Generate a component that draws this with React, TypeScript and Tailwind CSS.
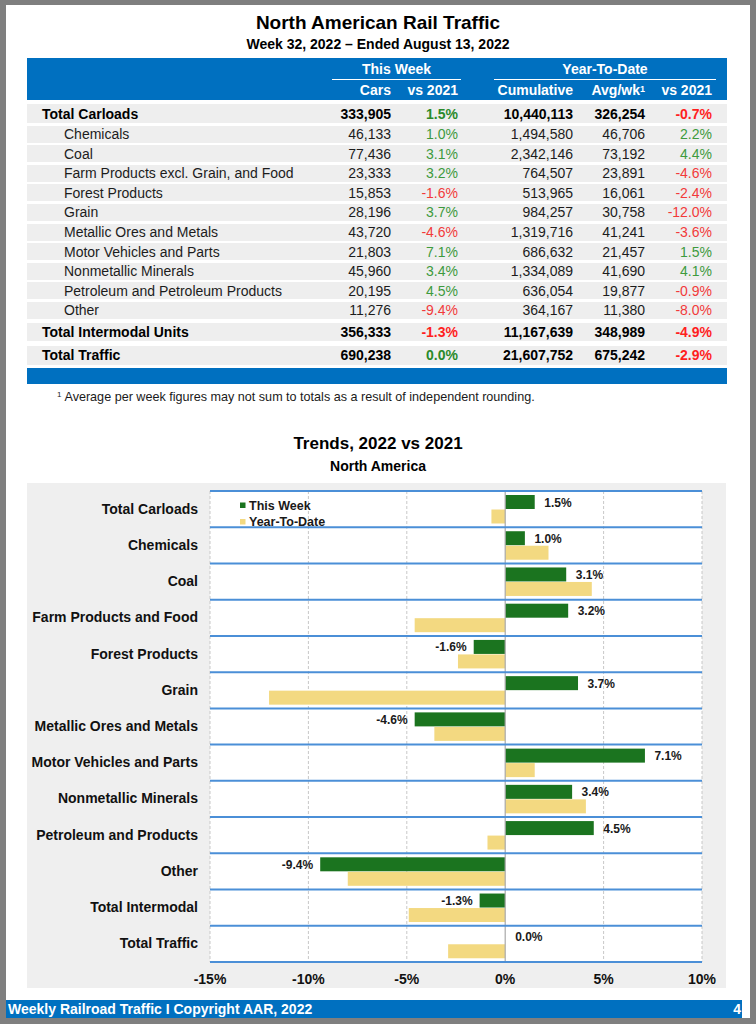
import React from 'react';

interface TrafficRow {
  name: string;
  cars: string;
  vs: string;
  cum: string;
  avg: string;
  ytd: string;
  kind: 'total' | 'sub';
}

const rows: TrafficRow[] = [
  { name: 'Total Carloads', cars: '333,905', vs: '1.5%', cum: '10,440,113', avg: '326,254', ytd: '-0.7%', kind: 'total' },
  { name: 'Chemicals', cars: '46,133', vs: '1.0%', cum: '1,494,580', avg: '46,706', ytd: '2.2%', kind: 'sub' },
  { name: 'Coal', cars: '77,436', vs: '3.1%', cum: '2,342,146', avg: '73,192', ytd: '4.4%', kind: 'sub' },
  { name: 'Farm Products excl. Grain, and Food', cars: '23,333', vs: '3.2%', cum: '764,507', avg: '23,891', ytd: '-4.6%', kind: 'sub' },
  { name: 'Forest Products', cars: '15,853', vs: '-1.6%', cum: '513,965', avg: '16,061', ytd: '-2.4%', kind: 'sub' },
  { name: 'Grain', cars: '28,196', vs: '3.7%', cum: '984,257', avg: '30,758', ytd: '-12.0%', kind: 'sub' },
  { name: 'Metallic Ores and Metals', cars: '43,720', vs: '-4.6%', cum: '1,319,716', avg: '41,241', ytd: '-3.6%', kind: 'sub' },
  { name: 'Motor Vehicles and Parts', cars: '21,803', vs: '7.1%', cum: '686,632', avg: '21,457', ytd: '1.5%', kind: 'sub' },
  { name: 'Nonmetallic Minerals', cars: '45,960', vs: '3.4%', cum: '1,334,089', avg: '41,690', ytd: '4.1%', kind: 'sub' },
  { name: 'Petroleum and Petroleum Products', cars: '20,195', vs: '4.5%', cum: '636,054', avg: '19,877', ytd: '-0.9%', kind: 'sub' },
  { name: 'Other', cars: '11,276', vs: '-9.4%', cum: '364,167', avg: '11,380', ytd: '-8.0%', kind: 'sub' },
  { name: 'Total Intermodal Units', cars: '356,333', vs: '-1.3%', cum: '11,167,639', avg: '348,989', ytd: '-4.9%', kind: 'total' },
  { name: 'Total Traffic', cars: '690,238', vs: '0.0%', cum: '21,607,752', avg: '675,242', ytd: '-2.9%', kind: 'total' },
];

// chart data: [label, this week, year-to-date]
const trends: [string, number, number][] = [
  ['Total Carloads', 1.5, -0.7],
  ['Chemicals', 1.0, 2.2],
  ['Coal', 3.1, 4.4],
  ['Farm Products and Food', 3.2, -4.6],
  ['Forest Products', -1.6, -2.4],
  ['Grain', 3.7, -12.0],
  ['Metallic Ores and Metals', -4.6, -3.6],
  ['Motor Vehicles and Parts', 7.1, 1.5],
  ['Nonmetallic Minerals', 3.4, 4.1],
  ['Petroleum and Products', 4.5, -0.9],
  ['Other', -9.4, -8.0],
  ['Total Intermodal', -1.3, -4.9],
  ['Total Traffic', 0.0, -2.9],
];

const GRID = 'grid grid-cols-[304px_60px_67px_115px_72px_67px_15px]';

function pctClass(v: string, bold: boolean) {
  if (v.startsWith('-')) return bold ? 'text-[#ff1f1f]' : 'text-[#f23a3a]';
  return bold ? 'text-[#2a8a2a]' : 'text-[#3d9a3d]';
}

function TableRow({ row, index }: { row: TrafficRow; index: number }) {
  const bold = row.kind === 'total';
  let spacing = 'h-[17px] mt-[2.6px]';
  if (index === 0) spacing = 'h-[19px] mt-[4px]';
  if (index === 11) spacing = 'h-[18.4px] mt-[4px]';
  if (index === 12) spacing = 'h-[19px] mt-[4.3px]';
  return (
    <div className={`${GRID} ${spacing} items-center bg-[#eeeeee] text-[14px] leading-none ${bold ? 'font-bold text-black' : 'text-[#1c1c1c]'}`}>
      <div className={bold ? 'pl-[15px]' : 'pl-[37px]'}>{row.name}</div>
      <div className="text-right">{row.cars}</div>
      <div className={`text-right ${pctClass(row.vs, bold)}`}>{row.vs}</div>
      <div className="text-right">{row.cum}</div>
      <div className="text-right">{row.avg}</div>
      <div className={`text-right ${pctClass(row.ytd, bold)}`}>{row.ytd}</div>
      <div />
    </div>
  );
}

const PLOT_W = 492;
const PLOT_H = 471;
const ROW_H = PLOT_H / 13;
const SCALE = PLOT_W / 25;
const px = (v: number) => (v + 15) * SCALE;

function TrendChart() {
  const zero = px(0);
  return (
    <svg width={PLOT_W} height={PLOT_H + 26} className="block overflow-visible">
      <rect x={0} y={0} width={PLOT_W} height={PLOT_H} fill="#ffffff" />
      {[-15, -10, -5, 5, 10].map((t) => (
        <line key={t} x1={px(t)} x2={px(t)} y1={0} y2={PLOT_H} stroke="#c8c8c8" strokeDasharray="3 2" />
      ))}
      {trends.map(([label, wk, ytd], i) => {
        const top = i * ROW_H;
        const wkX = wk >= 0 ? zero : px(wk);
        const ytdX = ytd >= 0 ? zero : px(ytd);
        const text = `${wk.toFixed(1)}%`;
        const labelX = wk > 0 ? px(wk) + 9.5 : wk < 0 ? px(wk) - 7 : zero + 10;
        return (
          <g key={label}>
            <rect x={wkX} y={top + 4} width={Math.abs(wk) * SCALE} height={14} fill="#1b741f" />
            <rect x={ytdX} y={top + 18.5} width={Math.abs(ytd) * SCALE} height={14} fill="#f3d981" />
            <text
              x={labelX}
              y={top + 11.5}
              textAnchor={wk < 0 ? 'end' : 'start'}
              dominantBaseline="central"
              fontSize={12}
              fontWeight={700}
              fill="#1a1a1a"
            >
              {text}
            </text>
          </g>
        );
      })}
      <line x1={zero} x2={zero} y1={0} y2={PLOT_H} stroke="#a9a9a9" strokeWidth={1.2} />
      {Array.from({ length: 14 }).map((_, i) => (
        <line key={i} x1={0} x2={PLOT_W} y1={i * ROW_H} y2={i * ROW_H} stroke="#4b8fd7" strokeWidth={2} />
      ))}
      {/* legend */}
      <rect x={30} y={11.5} width={5.5} height={5.5} fill="#1b741f" />
      <text x={39} y={14.5} dominantBaseline="central" fontSize={12.5} fontWeight={700} fill="#1a1a1a">
        This Week
      </text>
      <rect x={30} y={28} width={5.5} height={5.5} fill="#f3d981" />
      <text x={39} y={31} dominantBaseline="central" fontSize={12.5} fontWeight={700} fill="#1a1a1a">
        Year-To-Date
      </text>
      {[-15, -10, -5, 0, 5, 10].map((t) => (
        <text
          key={t}
          x={px(t)}
          y={PLOT_H + 17}
          textAnchor="middle"
          dominantBaseline="central"
          fontSize={14}
          fontWeight={700}
          fill="#111111"
        >
          {`${t}%`}
        </text>
      ))}
    </svg>
  );
}

export default function App() {
  return (
    <div className="w-[756px] h-[1024px] bg-[#7f7f7f] pt-[5px] pl-[6px] font-['Liberation_Sans',Arial,sans-serif]">
      <div className="w-[744px] h-[1013px] bg-white flex flex-col pt-[7px]">
        <h1 className="text-center text-[19px] leading-[22px] font-bold text-black">North American Rail Traffic</h1>
        <p className="mt-[2px] text-center text-[14px] leading-[17px] font-bold text-black">
          Week 32, 2022 – Ended August 13, 2022
        </p>

        <div className="ml-[21px] w-[700px] mt-[5px]">
          {/* header */}
          <div className="h-[42px] bg-[#0070c0] text-white font-bold text-[14px] leading-none">
            <div className={`${GRID} h-[22px]`}>
              <div />
              <div className="col-span-2 mr-[-3px] ml-[1px] border-b-[1.5px] border-white flex items-center justify-center pt-[1px]">
                This Week
              </div>
              <div className="col-span-3 ml-[36px] mr-[-4px] border-b-[1.5px] border-white flex items-center justify-center pt-[1px]">
                Year-To-Date
              </div>
              <div />
            </div>
            <div className={`${GRID} h-[20px] items-center`}>
              <div />
              <div className="text-right">Cars</div>
              <div className="text-right">vs 2021</div>
              <div className="text-right">Cumulative</div>
              <div className="text-right">
                Avg/wk<sup className="text-[9px] relative top-[-3px]">1</sup>
              </div>
              <div className="text-right">vs 2021</div>
              <div />
            </div>
          </div>

          {rows.map((row, i) => (
            <TableRow key={row.name} row={row} index={i} />
          ))}

          <div className="h-[15.7px] mt-[3.3px] bg-[#0070c0]" />
        </div>

        <p className="mt-[6px] ml-[51px] text-[12.6px] leading-[14px] text-[#1a1a1a]">
          <sup className="text-[8px] mr-[3px]">1</sup>
          Average per week figures may not sum to totals as a result of independent rounding.
        </p>

        <h2 className="mt-[30px] text-center text-[17px] leading-[20px] font-bold text-black">Trends, 2022 vs 2021</h2>
        <p className="mt-[4.5px] text-center text-[14px] leading-[17px] font-bold text-black">North America</p>

        <div className="mt-[7.5px] ml-[21px] w-[699px] h-[505px] bg-[#efefef] pt-[8px] flex">
          <div className="w-[183px] flex flex-col">
            {trends.map(([label]) => (
              <div
                key={label}
                className="h-[36.23px] flex items-center justify-end pr-[12px] text-[14px] font-bold text-[#111111] leading-none"
              >
                {label}
              </div>
            ))}
          </div>
          <TrendChart />
        </div>

        <div className="mt-auto h-[18px] w-[736px] bg-[#0070c0] flex items-center justify-between pl-[2px] pr-[1px] text-white font-bold text-[14px] leading-none">
          <span>Weekly Railroad Traffic I Copyright AAR, 2022</span>
          <span>4</span>
        </div>
      </div>
    </div>
  );
}
